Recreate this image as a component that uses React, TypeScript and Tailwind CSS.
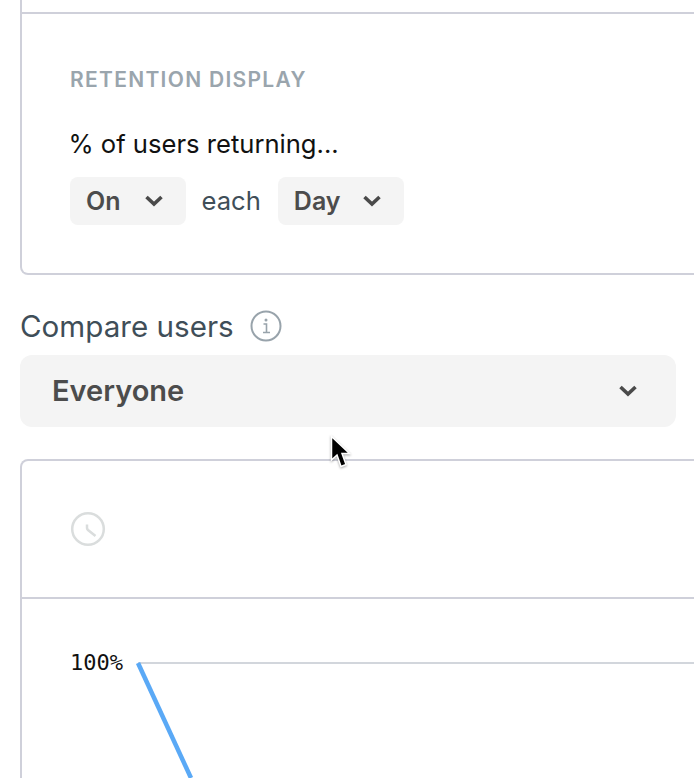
import React from "react";

const Chevron = ({ className = "" }: { className?: string }) => (
  <svg width="18" height="14" viewBox="0 0 18 14" fill="none" className={className}>
    <path d="M1.5 3 L9 10 L16.5 3" stroke="#4a4a4a" strokeWidth="3.6" strokeLinejoin="miter" />
  </svg>
);

const Select = ({ label, wide }: { label: string; wide?: boolean }) => (
  <div className={`flex h-12 items-center rounded-lg bg-[#f4f4f4] pl-4 text-[25px] font-semibold text-[#4c4c4c] ${wide ? "gap-6 pr-[23px]" : "gap-[22px] pr-[23px]"}`}>
    <span className="pt-px">{label}</span>
    <Chevron />
  </div>
);

export default function App() {
  return (
    <div
      className="relative h-[778px] w-[694px] overflow-hidden bg-white"
      style={{ fontFamily: "Inter, 'Noto Sans', sans-serif" }}
    >
      <div className="ml-5 w-[720px]">
        <div className="rounded-b-lg border-2 border-t-0 border-[#cfd0da]">
          <div className="h-[14px] border-b-2 border-[#cfd0da]" />
          <div className="pl-12 pt-[54px] pb-12">
            <div className="text-[21px] leading-6 font-semibold tracking-[1.3px] text-[#9aa5ad]">RETENTION DISPLAY</div>
            <div className="-ml-[1.5px] mt-[36px] text-[25.6px] leading-[32px] text-[#111111]">% of users returning...</div>
            <div className="mt-[17px] flex items-center">
              <Select label="On" wide />
              <span className="ml-4 mr-[17px] text-[25.6px] text-[#3f4e58]">each</span>
              <Select label="Day" />
            </div>
          </div>
        </div>
      </div>

      <div className="ml-5 mt-[33px] flex h-9 items-center gap-4">
        <span className="text-[29.6px] text-[#3f4e58]">Compare users</span>
        <svg width="32" height="32" viewBox="0 0 32 32" fill="none">
          <circle cx="16" cy="16" r="14.5" stroke="#98a3ab" strokeWidth="2" />
          <path d="M13.5 14 H16.5 V22.5 M13 22.5 H20" stroke="#98a3ab" strokeWidth="1.6" />
          <circle cx="16" cy="10" r="1.5" fill="#98a3ab" />
        </svg>
      </div>

      <div className="ml-5 mt-[11px] flex h-[72px] w-[656px] items-center justify-between rounded-xl bg-[#f4f4f4] pl-8 pr-[39px]">
        <span className="text-[29px] font-semibold text-[#4c4c4c]">Everyone</span>
        <Chevron />
      </div>

      <div className="ml-5 mt-8 w-[720px] rounded-t-lg border-2 border-b-0 border-[#cfd0da]">
        <div className="flex h-[138px] items-center border-b-2 border-[#cfd0da] pl-12">
          <svg width="36" height="36" viewBox="0 0 36 36" fill="none">
            <circle cx="18" cy="18" r="15.8" stroke="#dadddd" strokeWidth="2.5" />
            <path d="M17 13.5 V17 Q17 18 18 19 L25.5 25" stroke="#dadddd" strokeWidth="2.5" />
          </svg>
        </div>
        <div className="flex h-[200px] items-start pl-12 pt-[52px]">
          <span
            className="w-[68px] text-[22px] leading-6 text-[#111111]"
            style={{ fontFamily: "'DejaVu Sans Mono', monospace" }}
          >
            100%
          </span>
          <svg width="560" height="126" viewBox="0 0 560 126" fill="none" className="overflow-visible">
            <path d="M0 12 H560" stroke="#d2d6dc" strokeWidth="2" />
            <path d="M0 12 L53 127" stroke="#5aa9f6" strokeWidth="4.5" />
          </svg>
        </div>
      </div>

      <svg width="26" height="38" viewBox="0 0 26 38" className="absolute left-[328px] top-[434px] drop-shadow-[0_1px_1px_rgba(0,0,0,0.35)]">
        <path
          d="M3.5 2.5 V26 L9 21 L13 32.5 L18 30.5 L14 19.5 L21.5 19.5 Z"
          fill="#000000"
          stroke="#ffffff"
          strokeWidth="1.5"
        />
      </svg>
    </div>
  );
}
